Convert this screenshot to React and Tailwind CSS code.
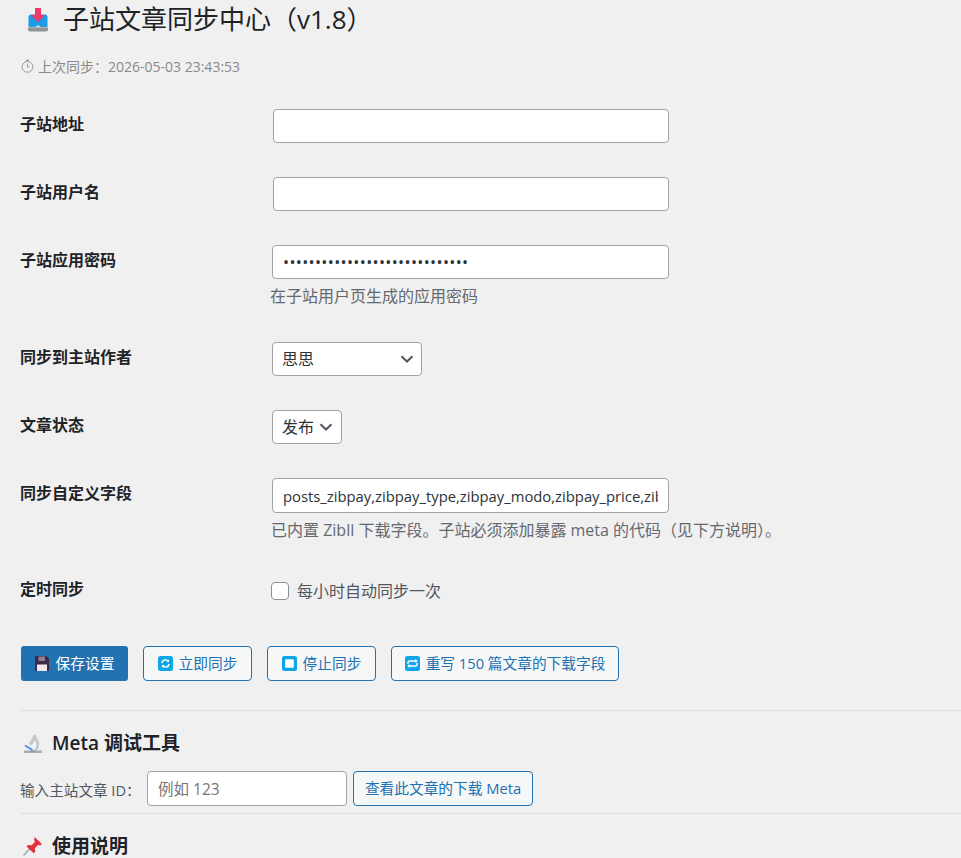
const FONT = "font-['Open_Sans','Noto_Sans_CJK_SC',sans-serif]";

function Label({ children }) {
  return <div className="w-[251px] shrink-0 pl-[20px] pt-[5px] text-[16px] leading-[20px] font-bold text-[#1d2327]">{children}</div>;
}

function TextBox({ value }) {
  return (
    <input
      readOnly
      type="text"
      value={value}
      className="block h-[34px] w-[396px] rounded-[4px] border border-[#a3a3a3] bg-white px-[10px] text-[15px] text-[#2c3338] outline-none"
    />
  );
}

function Chevron() {
  return (
    <svg width="14" height="8" viewBox="0 0 14 8" fill="none" stroke="#50575e" strokeWidth="2">
      <path d="M1.5 1.2 7 6.5l5.5-5.3" />
    </svg>
  );
}

function SyncIcon() {
  return (
    <svg width="15" height="15" viewBox="0 0 15 15">
      <rect width="15" height="15" rx="2.5" fill="#0ea5e9" />
      <path d="M3.8 7a3.8 3.8 0 0 1 6.6-1.8M11.2 8a3.8 3.8 0 0 1-6.6 1.8" fill="none" stroke="#fff" strokeWidth="1.4" />
      <path d="M11 3.2v2.8H8.4zM4 11.8V9h2.6z" fill="#fff" />
    </svg>
  );
}

function StopIcon() {
  return (
    <svg width="15" height="15" viewBox="0 0 15 15">
      <rect width="15" height="15" rx="2.5" fill="#0ea5e9" />
      <rect x="3.2" y="3.2" width="8.6" height="8.6" rx="0.8" fill="#fff" />
    </svg>
  );
}

function RepeatIcon() {
  return (
    <svg width="15" height="15" viewBox="0 0 15 15">
      <rect width="15" height="15" rx="2.5" fill="#0ea5e9" />
      <path d="M3 8V6.6A1.6 1.6 0 0 1 4.6 5H11M12 7v1.4A1.6 1.6 0 0 1 10.4 10H4" fill="none" stroke="#fff" strokeWidth="1.4" />
      <path d="M10.4 3l2.4 2-2.4 2zM4.6 8l-2.4 2 2.4 2z" fill="#fff" />
    </svg>
  );
}

function SaveIcon() {
  return (
    <svg width="14" height="15" viewBox="0 0 14 15">
      <path d="M1 0h10.5L14 2.5V14a1 1 0 0 1-1 1H1a1 1 0 0 1-1-1V1a1 1 0 0 1 1-1z" fill="#3b2a4a" />
      <rect x="2" y="8.5" width="10" height="6.5" fill="#f4e8ee" />
      <rect x="3.5" y="0.5" width="6.5" height="4.5" fill="#8a7f92" />
    </svg>
  );
}

function InboxIcon() {
  return (
    <svg width="22" height="26" viewBox="0 0 22 26">
      <path d="M1 17h20v5.5a2 2 0 0 1-2 2H3a2 2 0 0 1-2-2z" fill="#8f9498" />
      <path d="M1 17h20v3.5H1z" fill="#d5d8da" />
      <path d="M1.5 10a2.5 2.5 0 0 1 2.5-2.5h14a2.5 2.5 0 0 1 2.5 2.5v8.5a2 2 0 0 1-2 1.5H14l-3 -2-3 2H3.5a2 2 0 0 1-2-1.5z" fill="#1d9be6" />
      <path d="M8 1h6v7h4l-7 7-7-7h4z" fill="#f0386b" />
    </svg>
  );
}

function ClockIcon() {
  return (
    <svg width="13" height="14" viewBox="0 0 13 14" fill="none" stroke="#9a9a9a" strokeWidth="1">
      <circle cx="6.5" cy="7.8" r="5.4" />
      <path d="M5 1h3M6.5 1v1.4M6.5 8V4.6M6.5 8h2" />
    </svg>
  );
}

function MicroscopeIcon() {
  return (
    <svg width="20" height="20" viewBox="0 0 20 20">
      <path d="M1 17.5h18V20H1z" fill="#a8acaf" />
      <path d="M11 1.5l3 1.6-.9 1.6c3.4 2.2 4.4 7.6 1 12.8h-3c3.2-3.6 3-8.2.6-10.2l-3 5.2-2.6-1.5z" fill="#c3c7ca" />
      <path d="M2 12.5l7.5 4.5" stroke="#3f8fe8" strokeWidth="1.6" fill="none" />
      <path d="M7 17.5h6v1H7z" fill="#8d9295" />
    </svg>
  );
}

function PinIcon() {
  return (
    <svg width="20" height="20" viewBox="0 0 20 20">
      <path d="M0.5 19.5l6.5-7" stroke="#9aa0a4" strokeWidth="1.2" />
      <path d="M11.5 1l7.5 7-2 1.4-1.8-.6-3.3 3.4.4 3.6-1.6 1.4L3.5 10.5 5 9l3.6.3 3.3-3.4-.7-2z" fill="#e5303e" />
    </svg>
  );
}

function OutlineButton({ icon, children, className = "" }) {
  return (
    <button className={`flex h-[35px] items-center justify-center gap-[6px] rounded-[4px] border border-[#2271b1] bg-[#f6f7f7] text-[14.7px] text-[#2271b1] ${className}`}>
      {icon}
      <span>{children}</span>
    </button>
  );
}

export default function App() {
  return (
    <div className={`h-[858px] w-[961px] overflow-hidden bg-[#f0f0f1] ${FONT}`}>
      <div className="flex h-[39px] items-center pl-[27px] text-[#1d2327]">
        <InboxIcon />
        <h1 className="ml-[14px] text-[26px] leading-[39px] font-normal">子站文章同步中心（v1.8）</h1>
      </div>

      <div className="mt-[17px] flex h-[20px] items-center gap-[4px] pl-[21px] text-[14px] text-[#8a8a8a]">
        <ClockIcon />
        <span>上次同步：2026-05-03 23:43:53</span>
      </div>

      <div className="mt-[33px] flex h-[34px]">
        <Label>子站地址</Label>
        <div className="pl-[22px]"><TextBox value="" /></div>
      </div>

      <div className="mt-[34px] flex h-[34px]">
        <Label>子站用户名</Label>
        <div className="pl-[22px]"><TextBox value="" /></div>
      </div>

      <div className="mt-[34px] flex">
        <Label>子站应用密码</Label>
        <div className="pl-[21px]">
          <input readOnly type="text" value={"•".repeat(29)} className="block h-[34px] w-[397px] rounded-[4px] border border-[#a3a3a3] bg-white px-[10px] text-[16px] tracking-[0.38px] text-[#2c3338] outline-none" />
          <p className="mt-[6px] -ml-[2px] text-[16px] leading-[22px] text-[#646970]">在子站用户页生成的应用密码</p>
        </div>
      </div>

      <div className="mt-[35px] flex h-[34px]">
        <Label>同步到主站作者</Label>
        <div className="pl-[21px]">
          <div className="flex h-[34px] w-[150px] items-center justify-between rounded-[4px] border border-[#a3a3a3] bg-white pl-[9px] pr-[7px] text-[16px] text-[#2c3338]">
            <span>思思</span>
            <Chevron />
          </div>
        </div>
      </div>

      <div className="mt-[34px] flex h-[34px]">
        <Label>文章状态</Label>
        <div className="pl-[21px]">
          <div className="flex h-[34px] w-[70px] items-center justify-between rounded-[4px] border border-[#a3a3a3] bg-white pl-[9px] pr-[8px] text-[16px] text-[#2c3338]">
            <span>发布</span>
            <Chevron />
          </div>
        </div>
      </div>

      <div className="mt-[34px] flex">
        <Label>同步自定义字段</Label>
        <div className="pl-[21px]">
          <input readOnly type="text" value="posts_zibpay,zibpay_type,zibpay_modo,zibpay_price,zibpay_points" className="block h-[35px] w-[397px] rounded-[4px] border border-[#a3a3a3] bg-white px-[10px] text-[14.8px] text-[#2c3338] outline-none" />
          <p className="mt-[6px] -ml-[1px] whitespace-nowrap text-[16px] leading-[22px] text-[#646970]">已内置 Zibll 下载字段。子站必须添加暴露 meta 的代码（见下方说明）。</p>
        </div>
      </div>

      <div className="mt-[33px] flex h-[34px]">
        <Label>定时同步</Label>
        <div className="flex h-[34px] items-center pl-[20px] text-[16px] text-[#50575e]">
          <span className="h-[18px] w-[18px] rounded-[4px] border border-[#8c8f94] bg-white" />
          <span className="ml-[8px]">每小时自动同步一次</span>
        </div>
      </div>

      <div className="mt-[38px] flex pl-[21px]">
        <button className="flex h-[35px] w-[107px] items-center justify-center gap-[7px] rounded-[3px] bg-[#2271b1] text-[14.7px] text-white">
          <SaveIcon />
          <span>保存设置</span>
        </button>
        <OutlineButton icon={<SyncIcon />} className="ml-[15px] w-[109px]">立即同步</OutlineButton>
        <OutlineButton icon={<StopIcon />} className="ml-[15px] w-[109px]">停止同步</OutlineButton>
        <OutlineButton icon={<RepeatIcon />} className="ml-[15px] w-[228px]">重写 150 篇文章的下载字段</OutlineButton>
      </div>

      <div className="ml-[21px] mt-[29px] border-t border-[#dcdcde]" />

      <div className="mt-[20px] flex h-[24px] items-center gap-[9px] pl-[23px] text-[19px] font-semibold text-[#1d2327]">
        <MicroscopeIcon />
        <span>Meta 调试工具</span>
      </div>

      <div className="mt-[16px] flex h-[35px] items-center pl-[20px]">
        <span className="w-[127px] pt-[4px] text-[14.6px] text-[#50575e]">输入主站文章 ID：</span>
        <input readOnly placeholder="例如 123" className="h-[35px] w-[200px] rounded-[4px] border border-[#a3a3a3] bg-white px-[10px] text-[15.5px] text-[#646970] outline-none placeholder:text-[#757575]" />
        <button className="ml-[6px] h-[35px] w-[180px] rounded-[4px] border border-[#2271b1] bg-[#f6f7f7] text-[14.7px] text-[#2271b1]">查看此文章的下载 Meta</button>
      </div>

      <div className="ml-[21px] mt-[7px] border-t border-[#dcdcde]" />

      <div className="mt-[20px] flex h-[24px] items-center gap-[9px] pl-[23px] text-[19px] font-semibold text-[#1d2327]">
        <PinIcon />
        <span>使用说明</span>
      </div>
    </div>
  );
}
